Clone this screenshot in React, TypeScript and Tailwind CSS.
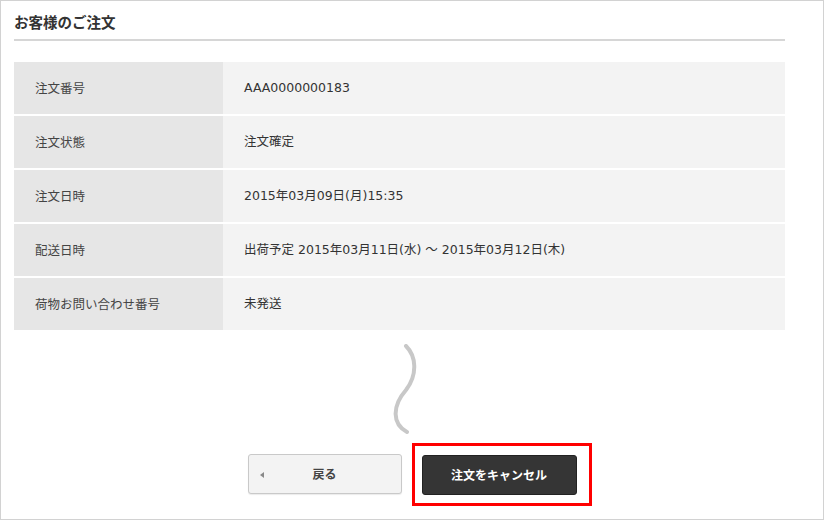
const ROWS: { label: string; value: string }[] = [
    { label: '注文番号', value: 'AAA0000000183' },
    { label: '注文状態', value: '注文確定' },
    { label: '注文日時', value: '2015年03月09日(月)15:35' },
    { label: '配送日時', value: '出荷予定 2015年03月11日(水) ～ 2015年03月12日(木)' },
    { label: '荷物お問い合わせ番号', value: '未発送' },
];

function Squiggle() {
    return (
        <svg width="44" height="92" viewBox="0 0 44 92" className="ml-[-10px]">
            <path
                d="M21 2 C31 12, 33 30, 21 46 C7 62, 7 80, 22 88"
                fill="none"
                stroke="#c8c8c8"
                strokeWidth="4"
                strokeLinecap="round"
            />
        </svg>
    );
}

export default function App() {
    return (
        <div className="w-[824px] h-[520px] bg-white border border-[#d2d2d2] font-['Noto_Sans_CJK_JP',sans-serif] text-[#333]">
            <div className="pl-[13px] pr-[38px] pt-[11px]">
                <h2 className="text-[14.5px] leading-[20px] font-bold text-[#333] pb-[7px] border-b-2 border-[#d6d6d6]">
                    お客様のご注文
                </h2>
                <div className="mt-[21px] flex flex-col gap-[2px]">
                    {ROWS.map((r) => (
                        <div key={r.label} className="flex h-[52px]">
                            <div className="w-[209px] bg-[#e6e6e6] flex items-center pl-[21px] text-[12.5px] text-[#444]">
                                {r.label}
                            </div>
                            <div className="flex-1 bg-[#f3f3f3] flex items-center pl-[21px] text-[12.5px] text-[#333] font-['DejaVu_Sans','Noto_Sans_CJK_JP',sans-serif]">
                                {r.value}
                            </div>
                        </div>
                    ))}
                </div>
            </div>

            <div className="mt-[14px] flex justify-center">
                <Squiggle />
            </div>

            <div className="mt-[18px] flex justify-center gap-[20px]">
                <button className="relative w-[154px] h-[40px] rounded-[3px] bg-[#f3f3f3] border border-[#c9c9c9] shadow-[0_1px_1px_rgba(0,0,0,0.08)] text-[12px] font-bold text-[#444]">
                    <span className="absolute left-[11px] top-[17px] w-0 h-0 border-y-[3px] border-y-transparent border-r-[4px] border-r-[#888]" />
                    戻る
                </button>
                <div className="relative mt-px">
                    <button className="w-[155px] h-[40px] rounded-[3px] bg-[#353535] border border-[#222] text-[12px] font-bold text-white">
                        注文をキャンセル
                    </button>
                    <div className="absolute -left-[10px] -top-[12px] w-[180px] h-[63px] border-[3px] border-[#ff0000]" />
                </div>
            </div>
        </div>
    );
}
